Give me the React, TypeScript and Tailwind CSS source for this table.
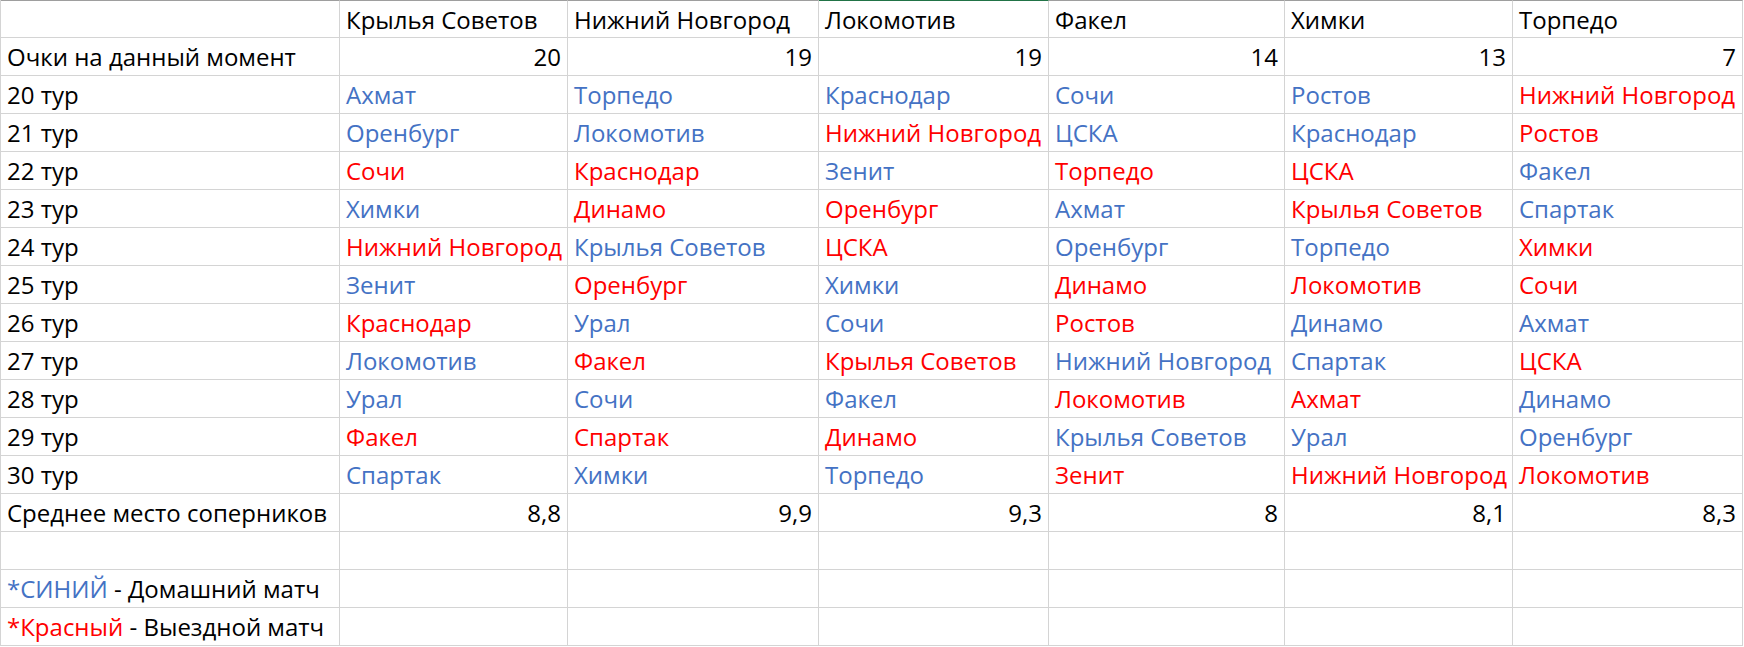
const FONT = "font-['Open_Sans',sans-serif]";

const TEAMS = ["Крылья Советов", "Нижний Новгород", "Локомотив", "Факел", "Химки", "Торпедо"];
const POINTS = ["20", "19", "19", "14", "13", "7"];
const AVERAGE = ["8,8", "9,9", "9,3", "8", "8,1", "8,3"];

// b = домашний (синий), r = выездной (красный)
const ROUNDS: { label: string; games: [string, "b" | "r"][] }[] = [
  { label: "20 тур", games: [["Ахмат", "b"], ["Торпедо", "b"], ["Краснодар", "b"], ["Сочи", "b"], ["Ростов", "b"], ["Нижний Новгород", "r"]] },
  { label: "21 тур", games: [["Оренбург", "b"], ["Локомотив", "b"], ["Нижний Новгород", "r"], ["ЦСКА", "b"], ["Краснодар", "b"], ["Ростов", "r"]] },
  { label: "22 тур", games: [["Сочи", "r"], ["Краснодар", "r"], ["Зенит", "b"], ["Торпедо", "r"], ["ЦСКА", "r"], ["Факел", "b"]] },
  { label: "23 тур", games: [["Химки", "b"], ["Динамо", "r"], ["Оренбург", "r"], ["Ахмат", "b"], ["Крылья Советов", "r"], ["Спартак", "b"]] },
  { label: "24 тур", games: [["Нижний Новгород", "r"], ["Крылья Советов", "b"], ["ЦСКА", "r"], ["Оренбург", "b"], ["Торпедо", "b"], ["Химки", "r"]] },
  { label: "25 тур", games: [["Зенит", "b"], ["Оренбург", "r"], ["Химки", "b"], ["Динамо", "r"], ["Локомотив", "r"], ["Сочи", "r"]] },
  { label: "26 тур", games: [["Краснодар", "r"], ["Урал", "b"], ["Сочи", "b"], ["Ростов", "r"], ["Динамо", "b"], ["Ахмат", "b"]] },
  { label: "27 тур", games: [["Локомотив", "b"], ["Факел", "r"], ["Крылья Советов", "r"], ["Нижний Новгород", "b"], ["Спартак", "b"], ["ЦСКА", "r"]] },
  { label: "28 тур", games: [["Урал", "b"], ["Сочи", "b"], ["Факел", "b"], ["Локомотив", "r"], ["Ахмат", "r"], ["Динамо", "b"]] },
  { label: "29 тур", games: [["Факел", "r"], ["Спартак", "r"], ["Динамо", "r"], ["Крылья Советов", "b"], ["Урал", "b"], ["Оренбург", "b"]] },
  { label: "30 тур", games: [["Спартак", "b"], ["Химки", "b"], ["Торпедо", "b"], ["Зенит", "r"], ["Нижний Новгород", "r"], ["Локомотив", "r"]] },
];

const cell =
  "h-[38px] border-r border-b border-[#d4d4d4] px-[6px] leading-[37px] whitespace-nowrap overflow-visible";

function Cell({ children, className = "" }: { children?: React.ReactNode; className?: string }) {
  return <div className={`${cell} ${className}`}>{children}</div>;
}

export default function App() {
  return (
    <div className={`w-[1744px] h-[647px] bg-white text-black text-[24px] ${FONT}`}>
      <div className="grid grid-cols-[339px_228px_251px_230px_236px_228px_230px] border-l border-[#d4d4d4]">
        {/* шапка */}
        <Cell className="border-t border-t-[#9e9e9e]" />
        {TEAMS.map((team) => (
          <Cell
            key={team}
            className={`border-t ${team === "Локомотив" ? "border-t-[#217346]" : "border-t-[#9e9e9e]"}`}
          >
            {team}
          </Cell>
        ))}

        <Cell>Очки на данный момент</Cell>
        {POINTS.map((p, i) => (
          <Cell key={i} className="text-right">
            {p}
          </Cell>
        ))}

        {ROUNDS.map((round) => (
          <>
            <Cell key={round.label}>{round.label}</Cell>
            {round.games.map(([name, side], i) => (
              <Cell key={round.label + i} className={side === "b" ? "text-[#4472c4]" : "text-[#ff0000]"}>
                {name}
              </Cell>
            ))}
          </>
        ))}

        <Cell>Среднее место соперников</Cell>
        {AVERAGE.map((a, i) => (
          <Cell key={i} className="text-right">
            {a}
          </Cell>
        ))}

        <Cell />
        {TEAMS.map((t) => (
          <Cell key={"e" + t} />
        ))}

        <Cell>
          <span className="text-[#4472c4]">*СИНИЙ</span> - Домашний матч
        </Cell>
        {TEAMS.map((t) => (
          <Cell key={"h" + t} />
        ))}

        <Cell>
          <span className="text-[#ff0000]">*Красный</span> - Выездной матч
        </Cell>
        {TEAMS.map((t) => (
          <Cell key={"a" + t} />
        ))}
      </div>
    </div>
  );
}
